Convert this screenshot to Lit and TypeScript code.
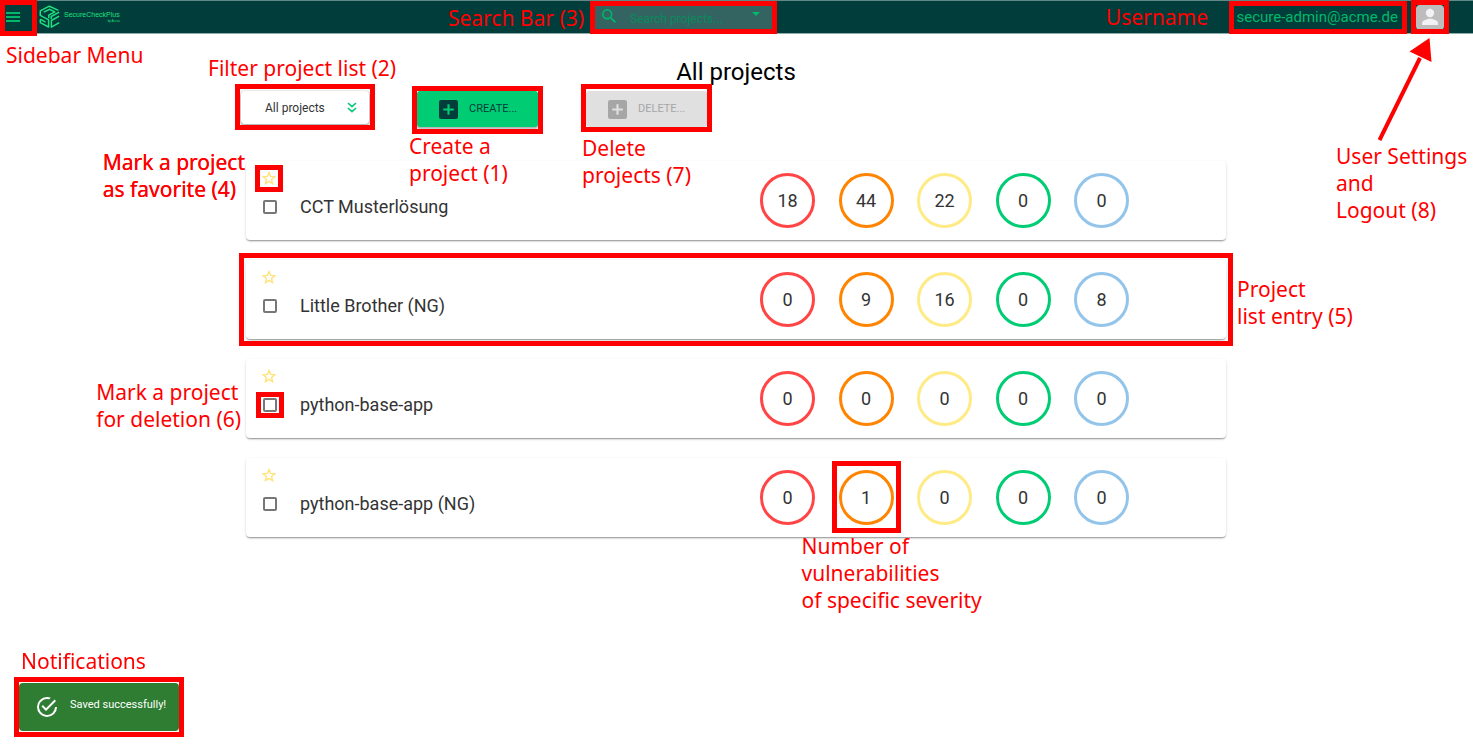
import { LitElement, html, css, svg } from "lit";
import { customElement, property, state } from "lit/decorators.js";
import { classMap } from "lit/directives/class-map.js";

interface Project {
  name: string;
  counts: number[];
  mark?: "favorite" | "entry" | "deletion" | "severity";
}

const SEVERITIES = ["critical", "high", "medium", "low", "info"];

const PROJECTS: Project[] = [
  { name: "CCT Musterlösung", counts: [18, 44, 22, 0, 0], mark: "favorite" },
  { name: "Little Brother (NG)", counts: [0, 9, 16, 0, 8], mark: "entry" },
  { name: "python-base-app", counts: [0, 0, 0, 0, 0], mark: "deletion" },
  { name: "python-base-app (NG)", counts: [0, 1, 0, 0, 0], mark: "severity" },
];

// Red frames and captions that explain the page, shared by all elements.
const guide = css`
  .target {
    position: relative;
  }
  .frame {
    position: absolute;
    border: 5px solid #ff0000;
    box-sizing: border-box;
    pointer-events: none;
    z-index: 2;
  }
  .note {
    position: absolute;
    color: #ff0000;
    font: 400 21px/27px "Noto Sans", sans-serif;
    white-space: pre;
    pointer-events: none;
    z-index: 3;
  }
  button,
  input,
  select {
    font-family: Roboto, sans-serif;
    margin: 0;
  }
`;

const plusBox = svg`<path fill="currentColor" d="M19 3H5a2 2 0 0 0-2 2v14a2 2 0 0 0 2 2h14a2 2 0 0 0 2-2V5a2 2 0 0 0-2-2zm-2 10h-4v4h-2v-4H7v-2h4V7h2v4h4v2z"/>`;

@customElement("app-header")
export class AppHeader extends LitElement {
  static styles = [
    guide,
    css`
      :host {
        display: block;
      }
      .bar {
        box-sizing: border-box;
        height: 34px;
        display: flex;
        align-items: center;
        background: #003d3b;
        border-top: 1px solid #5f8886;
        border-bottom: 1px solid #8fabaa;
        padding-right: 29px;
      }
      .menu {
        width: 39px;
        height: 32px;
        border: 0;
        padding: 0 0 0 6px;
        background: none;
        color: #00b869;
        display: flex;
        align-items: center;
      }
      .menu-frame {
        left: 0;
        top: -1px;
        width: 37px;
        height: 36px;
      }
      .menu-note {
        left: 6px;
        top: 41px;
      }
      .brand {
        display: flex;
        align-items: center;
        gap: 3px;
        padding-right: 11px;
        color: #1fe07f;
        text-decoration: none;
      }
      .words {
        display: flex;
        flex-direction: column;
        align-items: flex-end;
        font: 7px/8px "Liberation Sans", sans-serif;
      }
      .by {
        font-size: 3px;
        line-height: 4px;
      }
      .search {
        box-sizing: border-box;
        width: 177px;
        height: 25px;
        margin: 0 auto;
        padding: 0 12px 0 7px;
        display: flex;
        align-items: flex-start;
        background: #336462;
        color: #00b869;
      }
      .search input {
        flex: 1;
        min-width: 0;
        height: 25px;
        border: 0;
        outline: 0;
        padding: 4px 0 0;
        margin-left: 14px;
        background: none;
        color: #00b869;
        font-size: 12px;
        box-sizing: border-box;
      }
      .search input::placeholder {
        color: #0b8a5c;
        opacity: 1;
      }
      .lens {
        margin-top: 4px;
      }
      .caret {
        margin-top: 7px;
      }
      .search-frame {
        inset: -4px -5px;
      }
      .search-note {
        right: 188px;
        top: 0;
      }
      .user {
        color: #00b869;
        font-size: 15px;
        line-height: 18px;
      }
      .user-frame {
        inset: -7px -9px -8px -7px;
      }
      .user-note {
        right: 190px;
        top: -4px;
      }
      .avatar {
        display: flex;
        width: 28px;
        height: 25px;
        margin-left: 18px;
        border: 0;
        border-radius: 4px;
        padding: 0;
        background: #bdbdbd;
        justify-content: center;
      }
      .account {
        margin-left: 18px;
      }
      .account .avatar {
        margin-left: 0;
      }
      .avatar-frame {
        inset: -5px -5px -4px;
      }
      .arrow {
        position: absolute;
        left: -38px;
        top: 32px;
        z-index: 3;
      }
      .avatar-note {
        left: -80px;
        top: 138px;
        text-align: left;
      }
    `,
  ];

  render() {
    return html`
      <header class="bar">
        <div class="target">
          <button class="menu" aria-label="Open sidebar menu">
            <svg width="14" height="12" viewBox="0 0 14 12" stroke="currentColor" stroke-width="1.8">
              <path d="M0 2h14M0 6h14M0 10h14" />
            </svg>
          </button>
          <span class="frame menu-frame"></span>
          <span class="note menu-note">Sidebar Menu</span>
        </div>
        <a class="brand" href="#" aria-label="SecureCheckPlus">
          <svg width="22" height="24" viewBox="0 0 22 24" fill="none" stroke="currentColor" stroke-width="1.5" stroke-linejoin="round">
            <path d="M19.400 5.400 10.300 1.200 1.300 5.800v4.600l8.300 4.400v7.200L1.300 17.600v-3.200" />
            <path d="M4.800 7.200 10.400 4.300l5.400 2.600-6 3.200v3.100" />
            <path d="M20.200 7.200 12.200 11.500v2.600M20.200 11.200l-7.800 4.300v6.700l7.800-4.500M1.300 14.200l5.200 2.900" />
          </svg>
          <span class="words"><span>SecureCheckPlus</span><span class="by">by Accso</span></span>
        </a>
        <div class="search target">
          <svg class="lens" width="14" height="14" viewBox="3 3 17.5 17.5" fill="currentColor">
            <path d="M15.5 14h-.79l-.28-.27A6.47 6.47 0 0 0 16 9.5 6.5 6.5 0 1 0 9.5 16c1.61 0 3.09-.59 4.23-1.57l.27.28v.79l5 4.99L20.49 19l-4.99-5zm-6 0a4.5 4.5 0 1 1 0-9 4.5 4.5 0 0 1 0 9z" />
          </svg>
          <input type="text" aria-label="Search projects" placeholder="Search projects..." />
          <svg class="caret" width="8" height="4" viewBox="0 0 8 4" fill="currentColor"><path d="M0 0h8L4 4z" /></svg>
          <span class="frame search-frame"></span>
          <span class="note search-note">Search Bar (3)</span>
        </div>
        <div class="user target">
          secure-admin@acme.de
          <span class="frame user-frame"></span>
          <span class="note user-note">Username</span>
        </div>
        <div class="account target">
          <button class="avatar" aria-label="User settings and logout">
            <svg width="18" height="25" viewBox="0 0 18 25" fill="#f2f2f6">
              <circle cx="9" cy="8" r="4.2" />
              <path d="M1 20v-1.6c0-3 5.3-4.6 8-4.6s8 1.6 8 4.6V20z" />
            </svg>
          </button>
          <span class="frame avatar-frame"></span>
          <svg class="arrow" width="56" height="106" viewBox="0 0 56 106">
            <path d="M1.500 103 42 21" stroke="#f00" stroke-width="4" />
            <path d="M51.500 1 31.500 14.500 53.500 25z" fill="#f00" />
          </svg>
          <span class="note avatar-note">User Settings
and
Logout (8)</span>
        </div>
      </header>
    `;
  }
}

@customElement("project-card")
export class ProjectCard extends LitElement {
  @property({ attribute: false }) project!: Project;
  @state() private favorite = false;

  static styles = [
    guide,
    css`
      :host {
        display: block;
      }
      .card {
        box-sizing: border-box;
        height: 79px;
        display: flex;
        align-items: center;
        padding: 0 97px 0 16px;
        border-radius: 4px;
        background: #fff;
        box-shadow: 0 2px 2px -1px rgba(0, 0, 0, 0.24), 0 1px 1px rgba(0, 0, 0, 0.14),
          0 1px 3px rgba(0, 0, 0, 0.12);
      }
      .info {
        flex: 1;
        align-self: stretch;
        display: flex;
        flex-direction: column;
        align-items: flex-start;
        padding-top: 10px;
      }
      .star {
        display: block;
        width: 14px;
        height: 14px;
        border: 0;
        padding: 0;
        background: none;
        color: #ffe37a;
      }
      .star svg {
        display: block;
      }
      .pick {
        display: flex;
        align-items: center;
        margin-top: 10px;
        padding-left: 1px;
        font-size: 18px;
        line-height: 24px;
        color: #333;
      }
      .box {
        display: flex;
        margin-right: 23px;
      }
      .tick {
        appearance: none;
        box-sizing: border-box;
        width: 14px;
        height: 14px;
        border: 2px solid #777;
        border-radius: 2px;
        background: #fff;
      }
      .tick:checked {
        background: #00cc74;
      }
      .counts {
        display: flex;
        justify-content: space-between;
        width: 369px;
      }
      .count {
        box-sizing: border-box;
        width: 55px;
        height: 55px;
        border: 3px solid;
        border-radius: 50%;
        display: flex;
        align-items: center;
        justify-content: center;
        font-size: 18px;
        line-height: 24px;
      }
      .count b {
        font-weight: 400;
        color: #333;
      }
      .critical {
        border-color: #ff4545;
      }
      .high {
        border-color: #ff8400;
      }
      .medium {
        border-color: #ffeb85;
      }
      .low {
        border-color: #00cc74;
      }
      .info-level {
        border-color: #93c4ea;
      }
      .star-frame {
        inset: -6px -7px -7px;
      }
      .star-note {
        right: 31px;
        top: -22px;
        text-shadow: 0 0 0 #ff0000;
      }
      .entry-frame {
        inset: -7px;
      }
      .entry-note {
        left: calc(100% + 11px);
        top: 16px;
      }
      .tick-frame {
        inset: -6px -7px;
      }
      .tick-note {
        right: 36px;
        top: -19px;
      }
      .count-frame {
        inset: -12px -10px -11px;
      }
      .count-note {
        left: -40px;
        top: 60px;
      }
    `,
  ];

  private note(kind: string, text: string) {
    return html`<span class="frame ${kind}-frame"></span><span class="note ${kind}-note">${text}</span>`;
  }

  render() {
    const { name, counts, mark } = this.project;
    return html`
      <article class="card target">
        <div class="info">
          <div class="target">
            <button
              class="star"
              aria-label="Mark as favorite"
              aria-pressed=${this.favorite}
              @click=${() => (this.favorite = !this.favorite)}
            >
              <svg width="14" height="14" viewBox="2 1.500 20 20" fill=${this.favorite ? "currentColor" : "none"} stroke="currentColor" stroke-width="2">
                <path d="M12 3.800 14.300 9.300 20.200 9.800 15.700 13.700 17.100 19.500 12 16.400 6.900 19.500 8.300 13.700 3.800 9.800 9.700 9.300z" />
              </svg>
            </button>
            ${mark === "favorite" ? this.note("star", "Mark a project\nas favorite (4)") : ""}
          </div>
          <label class="pick">
            <span class="box target">
              <input class="tick" type="checkbox" />
              ${mark === "deletion" ? this.note("tick", "Mark a project\nfor deletion (6)") : ""}
            </span>
            ${name}
          </label>
        </div>
        <div class="counts">
          ${counts.map((n, i) => {
            const level = SEVERITIES[i] === "info" ? "info-level" : SEVERITIES[i];
            return html`<div class=${classMap({ count: true, target: true, [level]: true })}>
              <b>${n}</b>
              ${mark === "severity" && i === 1
                ? this.note("count", "Number of\nvulnerabilities\nof specific severity")
                : ""}
            </div>`;
          })}
        </div>
        ${mark === "entry" ? this.note("entry", "Project\nlist entry (5)") : ""}
      </article>
    `;
  }
}

@customElement("app-root")
export class AppRoot extends LitElement {
  static styles = [
    guide,
    css`
      :host {
        display: block;
        min-height: 100vh;
        overflow: hidden;
        background: #fff;
        font-family: Roboto, sans-serif;
      }
      main {
        padding: 24px 247px 40px 246px;
      }
      h1 {
        margin: 0 0 5px;
        text-align: center;
        font-size: 24px;
        line-height: 28px;
        font-weight: 400;
        color: #000;
      }
      .toolbar {
        display: flex;
        align-items: flex-start;
        gap: 48px;
        margin-left: -5px;
      }
      .filter {
        appearance: none;
        display: block;
        box-sizing: border-box;
        width: 128px;
        height: 33px;
        padding: 1px 24px 0;
        border: 0;
        border-radius: 4px;
        background: #fff;
        color: #333;
        font-size: 12px;
        box-shadow: 0 1px 2px 1px rgba(0, 0, 0, 0.3);
      }
      .chevrons {
        position: absolute;
        right: 12px;
        top: 11px;
        pointer-events: none;
      }
      .action {
        box-sizing: border-box;
        width: 121px;
        height: 36px;
        display: flex;
        align-items: center;
        gap: 11px;
        padding: 0 0 0 22px;
        border: 0;
        border-radius: 3px;
        font-size: 11px;
        line-height: 16px;
      }
      .create {
        background: #00cc74;
        color: #003d3b;
        box-shadow: 0 2px 2px rgba(0, 0, 0, 0.3);
      }
      .delete {
        background: #e0e0e0;
        color: #a6a6a6;
      }
      .list {
        display: flex;
        flex-direction: column;
        gap: 20px;
        margin-top: 34px;
      }
      .filter-frame {
        inset: -7px -6px -6px;
      }
      .filter-note {
        left: -33px;
        top: -36px;
      }
      .create-frame {
        inset: -5px -5px -7px;
      }
      .create-note {
        left: -8px;
        top: 42px;
      }
      .delete-frame {
        inset: -7px -5px -5px;
      }
      .delete-note {
        left: -4px;
        top: 44px;
      }
      .toast {
        position: fixed;
        left: 19px;
        bottom: 19px;
        box-sizing: border-box;
        width: 160px;
        height: 48px;
        display: flex;
        align-items: center;
        gap: 13px;
        padding-left: 18px;
        border-radius: 4px;
        background: #2e7d32;
        color: #fff;
        font-size: 11px;
        line-height: 16px;
      }
      .toast p {
        margin: 0 0 4px;
      }
      .toast-frame {
        inset: -6px -5px;
      }
      .toast-note {
        left: 2px;
        top: -35px;
      }
    `,
  ];

  render() {
    return html`
      <app-header></app-header>
      <main>
        <h1>All projects</h1>
        <div class="toolbar">
          <div class="target">
            <select class="filter" aria-label="Filter project list">
              <option>All projects</option>
            </select>
            <svg class="chevrons" width="10" height="11" viewBox="0 0 10 11" fill="none" stroke="#00cc74" stroke-width="1.6">
              <path d="M1 1l4 3.600L9 1M1 6l4 3.600L9 6" />
            </svg>
            <span class="frame filter-frame"></span>
            <span class="note filter-note">Filter project list (2)</span>
          </div>
          <div class="target">
            <button class="action create">
              <svg width="19" height="19" viewBox="3 3 18 18">${plusBox}</svg>CREATE...
            </button>
            <span class="frame create-frame"></span>
            <span class="note create-note">Create a
project (1)</span>
          </div>
          <div class="target">
            <button class="action delete" disabled>
              <svg width="19" height="19" viewBox="3 3 18 18">${plusBox}</svg>DELETE...
            </button>
            <span class="frame delete-frame"></span>
            <span class="note delete-note">Delete
projects (7)</span>
          </div>
        </div>
        <div class="list">
          ${PROJECTS.map((p) => html`<project-card .project=${p}></project-card>`)}
        </div>
      </main>
      <div class="toast" role="status">
        <svg width="20" height="20" viewBox="2 2 20 20" fill="#fff">
          <path d="M20 12a8 8 0 1 1-5.800-7.700l1.570-1.570A9.820 9.820 0 0 0 12 2a10 10 0 1 0 10 10h-2zM7.910 10.080 6.500 11.500 11 16 21 6l-1.410-1.420L11 13.170l-3.090-3.090z" />
        </svg>
        <p>Saved successfully!</p>
        <span class="frame toast-frame"></span>
        <span class="note toast-note">Notifications</span>
      </div>
    `;
  }
}
